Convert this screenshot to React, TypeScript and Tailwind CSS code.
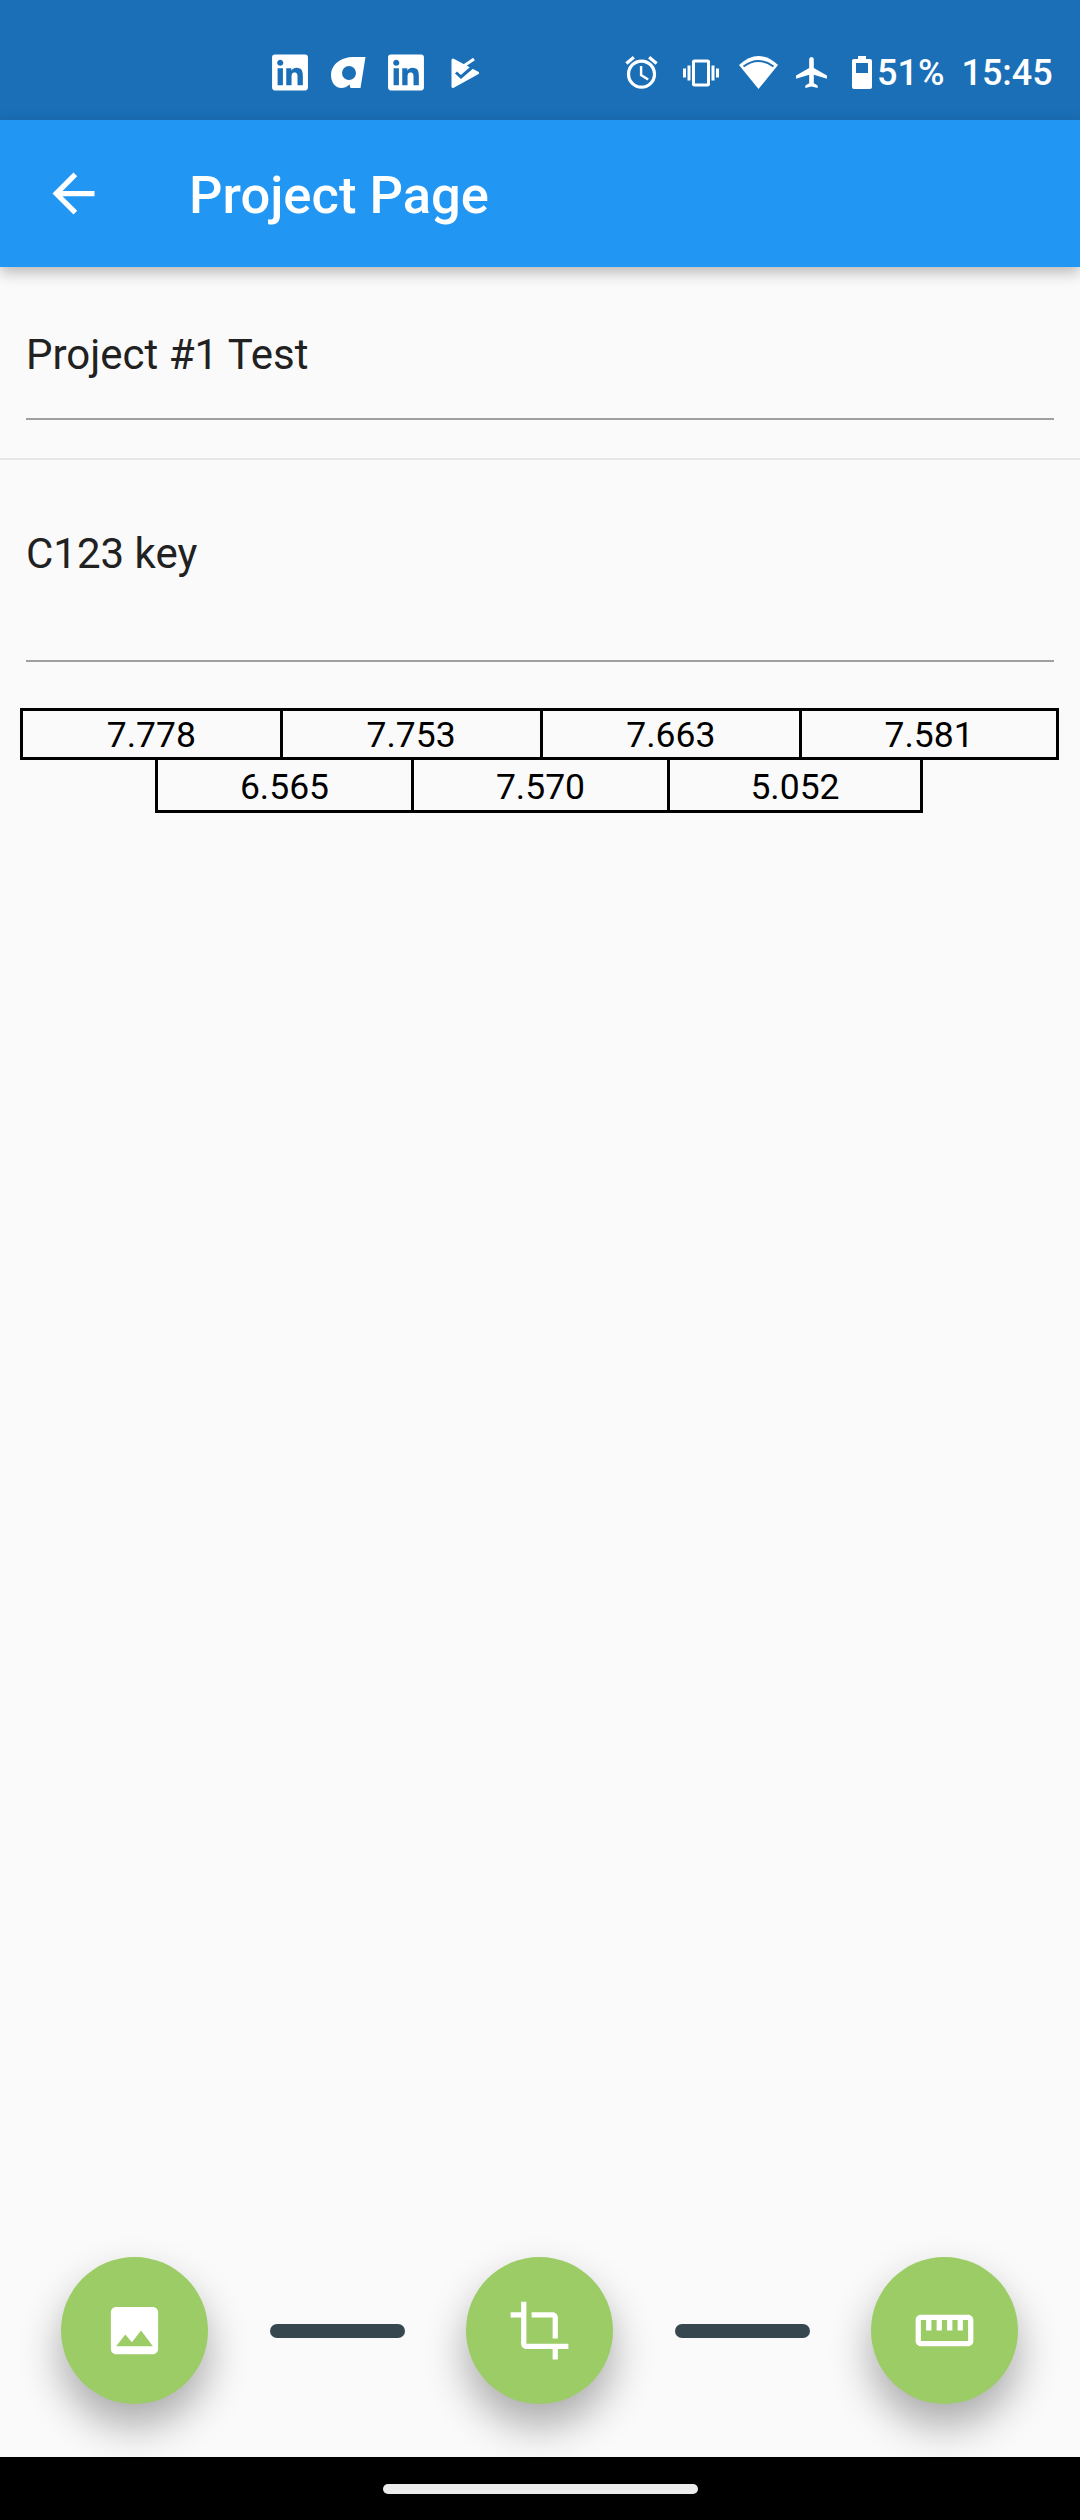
import type { ReactNode } from "react";
import { MdArrowBack, MdImage, MdCrop, MdOutlineStraighten, MdOutlineAlarm, MdVibration, MdAirplanemodeActive } from "react-icons/md";
import { FaLinkedin } from "react-icons/fa";

const rowOne = ["7.778", "7.753", "7.663", "7.581"];
const rowTwo = ["6.565", "7.570", "5.052"];

function Fab({ children }: { children: ReactNode }) {
  return (
    <div className="w-[147px] h-[147px] rounded-full bg-[#9CCC65] flex items-center justify-center text-white shrink-0 shadow-[0_22px_42px_rgba(0,0,0,0.32)]">
      {children}
    </div>
  );
}

function Dash() {
  return <div className="w-[135px] h-[14px] rounded-full bg-[#37474F] shrink-0" />;
}

export default function App() {
  return (
    <div className="w-[1080px] h-[2520px] bg-[#FAFAFA] flex flex-col overflow-hidden font-['Roboto',sans-serif]">
      <div className="h-[120px] bg-[#1A6FB7] flex items-center pt-[25px] pl-[272px] text-white shrink-0">
        <FaLinkedin className="w-[36px] h-[41px] shrink-0" />
        <svg width="35" height="31" viewBox="0 0 35 31" fill="currentColor" className="ml-[23px] shrink-0">
          <path fillRule="evenodd" d="M15 1C17 .3 19 0 21 0H34.5L29.5 31H19.5L18.5 27.5C16 30 13 31 10.5 31 4 31 0 25 0 18 0 10 6 3 15 1ZM18 9A7 7 0 1 0 18 23 7 7 0 1 0 18 9Z" />
        </svg>
        <FaLinkedin className="w-[36px] h-[41px] ml-[22px] shrink-0" />
        <svg width="28" height="30" viewBox="0 0 28 30" className="ml-[27px] shrink-0">
          <path d="M2 2 26.5 15 2 28.500Z" fill="#fff" stroke="#fff" strokeWidth="3" strokeLinejoin="round" />
          <path d="M5 14.500 10 19 22 8.500" fill="none" stroke="#1A6FB7" strokeWidth="3" />
          <path d="M9 10.500 23 1" fill="none" stroke="#fff" strokeWidth="3" />
        </svg>
        <MdOutlineAlarm size={39} className="ml-[143px] shrink-0" />
        <MdVibration size={36} className="ml-[22px] shrink-0" />
        <svg width="39" height="33" viewBox="0 0 39 33" className="ml-[20px] shrink-0">
          <path d="M0 9Q19.500 -9 39 9L19.500 33Z" fill="#fff" />
          <path d="M4.500 10.500Q19.500 -.5 34.500 10.500" fill="none" stroke="#1A6FB7" strokeWidth="2" />
        </svg>
        <MdAirplanemodeActive size={37} className="ml-[15px] shrink-0" />
        <svg width="20" height="33" viewBox="0 0 20 33" fill="#fff" className="ml-[22px] shrink-0">
          <path fillRule="evenodd" d="M6 0H14V3H18A2 2 0 0 1 20 5V31A2 2 0 0 1 18 33H2A2 2 0 0 1 0 31V5A2 2 0 0 1 2 3H6ZM4 7V17H16V7Z" />
        </svg>
        <span className="text-[36px] leading-none font-medium ml-[5px]">51%</span>
        <span className="text-[36px] leading-none font-medium ml-[17px]">15:45</span>
      </div>

      <div className="h-[147px] bg-[#2196F3] flex items-center text-white shrink-0 relative shadow-[0_5px_14px_rgba(0,0,0,0.28)]">
        <MdArrowBack size={63} className="ml-[42px]" />
        <span className="ml-[84px] mt-[3px] text-[52.5px] font-medium leading-none">Project Page</span>
      </div>

      <div className="px-[26px]">
        <div className="h-[153px] flex items-end border-b-[2px] border-[#A0A0A0]">
          <span className="text-[42px] leading-none text-[#212121] mb-[42px]">Project #1 Test</span>
        </div>
      </div>
      <div className="h-[2px] bg-[#E6E6E6] mt-[38px]" />
      <div className="px-[26px]">
        <div className="h-[202px] border-b-[2px] border-[#A0A0A0]">
          <div className="text-[42px] leading-none text-[#212121] pt-[73px]">C123 key</div>
        </div>
      </div>

      <div className="mt-[46px] ml-[20px] w-[1039px] grid grid-cols-4">
        {rowOne.map((v, i) => (
          <div
            key={v}
            className={`h-[52px] border-y-[3px] border-l-[3px] border-black text-center text-black text-[35.5px] leading-[46px] pt-[1px] ${i === 3 ? "border-r-[3px]" : ""}`}
          >
            {v}
          </div>
        ))}
      </div>
      <div className="ml-[155px] w-[768px] grid grid-cols-3">
        {rowTwo.map((v, i) => (
          <div
            key={v}
            className={`h-[53px] border-b-[3px] border-l-[3px] border-black pt-[5px] text-center text-black text-[35.5px] leading-[45px] ${i === 2 ? "border-r-[3px]" : ""}`}
          >
            {v}
          </div>
        ))}
      </div>

      <div className="flex-1" />

      <div className="h-[200px] pb-[53px] flex items-center gap-[61.5px] pl-[61px] shrink-0">
        <Fab><MdImage size={63} /></Fab>
        <Dash />
        <Fab><MdCrop size={63} /></Fab>
        <Dash />
        <Fab><MdOutlineStraighten size={63} /></Fab>
      </div>

      <div className="h-[63px] bg-black flex items-center justify-center pt-[1px] shrink-0">
        <div className="w-[315px] h-[10px] rounded-full bg-[#ECECEC]" />
      </div>
    </div>
  );
}
